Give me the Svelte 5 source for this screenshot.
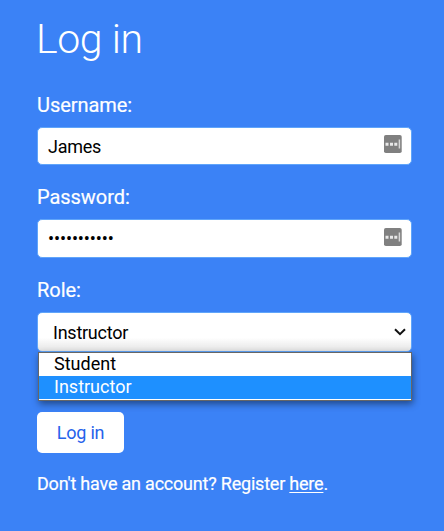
<script>
  let username = $state('James');
  let password = $state('instructor1');
  let role = $state('Instructor');
  const roles = ['Student', 'Instructor'];
</script>

{#snippet fillIcon()}
  <svg class="fill" width="18" height="18" viewBox="0 0 18 18" aria-hidden="true">
    <rect width="17.7" height="18" rx="1.8" fill="#808080" />
    <path d="M1.5 7.7h3v3h-3zM6 7.7h3v3H6zM10.3 7.7h3v3h-3z" fill="#e8e8e8" />
    <path d="M15.4 4.5v9" stroke="#d8d8d8" stroke-width="1.5" />
  </svg>
{/snippet}

<main>
  <h1>Log in</h1>
  <form onsubmit={(e) => e.preventDefault()}>
    <label for="username">Username:</label>
    <div class="field first">
      <input id="username" type="text" bind:value={username} />
      {@render fillIcon()}
    </div>

    <label for="password">Password:</label>
    <div class="field second">
      <input id="password" type="password" bind:value={password} />
      {@render fillIcon()}
    </div>

    <span class="label">Role:</span>
    <div class="select">
      <span class="value">{role}</span>
      <svg width="12" height="8" viewBox="0 0 12 8" aria-hidden="true">
        <path d="M1 1.2 6 6.2 11 1.2" fill="none" stroke="#111" stroke-width="2" />
      </svg>
      <div class="menu" role="listbox">
        {#each roles as item}
          <button type="button" class="option" class:active={item === role} role="option" aria-selected={item === role} onclick={() => (role = item)}>{item}</button>
        {/each}
      </div>
    </div>

    <button class="submit">Log in</button>
  </form>
  <p>Don't have an account? Register <a href="#register">here</a>.</p>
</main>

<style>
  :global(body) {
    background: #3b82f6;
  }
  main {
    box-sizing: border-box;
    height: 531px;
    padding: 15px 32px 0 37px;
    overflow: hidden;
    color: #fff;
    background: #3b82f6;
    font: 18px/28px Roboto, sans-serif;
  }
  h1 {
    margin: 0 0 28px -1px;
    font-size: 41px;
    font-weight: 300;
    line-height: 48px;
    letter-spacing: -0.4px;
  }
  form {
    display: flex;
    flex-direction: column;
    align-items: stretch;
  }
  label,
  .label {
    height: 28px;
    margin-bottom: 8px;
    font-size: 20px;
    line-height: 28px;
    letter-spacing: -0.05px;
    -webkit-text-stroke: 0.2px;
  }
  .field,
  .select {
    box-sizing: border-box;
    display: flex;
    align-items: center;
    border: 1px solid #60a5fa;
    border-radius: 5px;
    background: #fff;
    color: #000;
  }
  .field {
    height: 38px;
    padding: 0 9px 0 10px;
  }
  .first {
    margin-bottom: 18px;
  }
  .first input {
    padding-top: 2px;
  }
  .second {
    height: 39px;
    margin-bottom: 18px;
  }
  input {
    flex: 1;
    min-width: 0;
    padding: 0;
    border: 0;
    outline: 0;
    background: none;
    color: #000;
    font: 18px/26px Roboto, sans-serif;
    letter-spacing: -0.25px;
  }
  #password {
    letter-spacing: -0.1px;
  }
  .fill {
    margin-bottom: 4px;
  }
  .select {
    position: relative;
    height: 40px;
    padding: 0 5px 0 15px;
    justify-content: space-between;
    background: linear-gradient(#fff 65%, #e4e4e4);
  }
  .value {
    padding-top: 2px;
    letter-spacing: -0.25px;
  }
  .menu {
    position: absolute;
    top: 39px;
    left: 0;
    right: -1px;
    display: flex;
    flex-direction: column;
    padding-bottom: 1px;
    border: 1px solid #666;
    background: #fff;
    box-shadow: 1px 3px 7px rgba(0, 0, 0, 0.45);
  }
  .option {
    height: 23px;
    padding: 0 15px 2px;
    border: 0;
    background: #fff;
    color: #000;
    font: 18px/21px Roboto, sans-serif;
    text-align: left;
  }
  .option.active {
    background: #1e90ff;
    color: #fff;
  }
  .submit {
    align-self: flex-start;
    width: 87px;
    height: 41px;
    margin-top: 60px;
    padding: 0;
    border: 0;
    border-radius: 5px;
    background: #fff;
    color: #2563eb;
    font: 18px/28px Roboto, sans-serif;
    letter-spacing: -0.2px;
  }
  p {
    margin: 17px 0 0;
    letter-spacing: -0.21px;
    -webkit-text-stroke: 0.2px;
  }
  a {
    color: inherit;
    text-underline-offset: 2px;
  }
</style>
